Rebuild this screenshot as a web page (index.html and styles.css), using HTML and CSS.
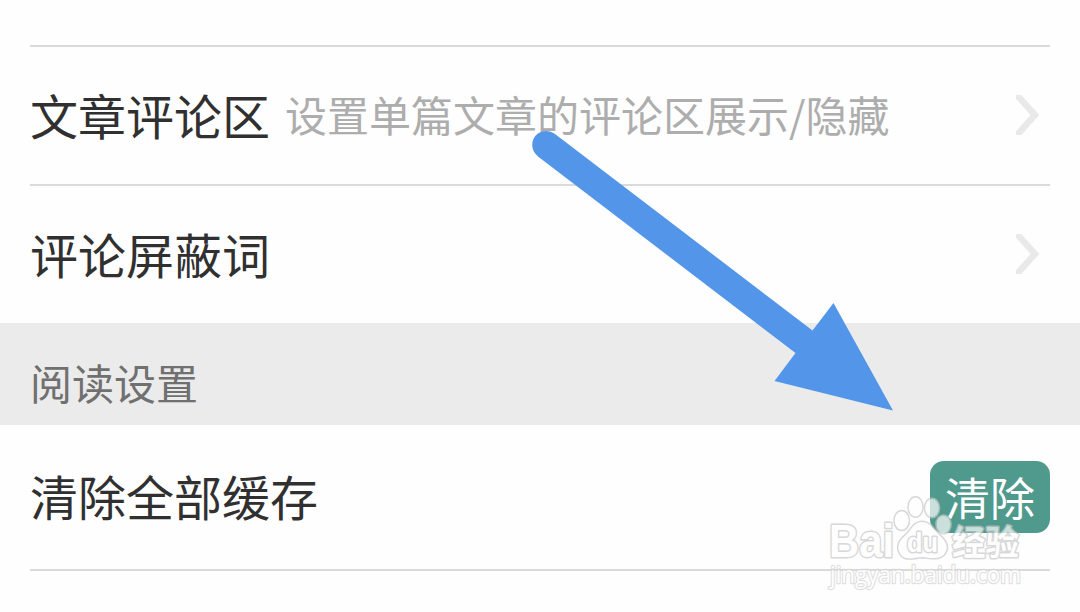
FILE: index.html
```
<!DOCTYPE html>
<html lang="zh-CN">
<head>
    <meta charset="UTF-8">
    <meta name="viewport" content="width=device-width, initial-scale=1.0">
    <title>设置</title>
    <link rel="stylesheet" href="styles.css">
</head>
<body>
    <div class="group">
        <div class="row">
            <span class="label">文章评论区</span>
            <span class="hint">设置单篇文章的评论区展示/隐藏</span>
            <svg class="chevron" width="24" height="40" viewBox="0 0 24 40">
                <path d="M0 -1L19 20L0 41"/>
            </svg>
        </div>
        <div class="row last">
            <span class="label">评论屏蔽词</span>
            <svg class="chevron" width="24" height="40" viewBox="0 0 24 40">
                <path d="M0 -1L19 20L0 41"/>
            </svg>
        </div>
    </div>
    <div class="section-title">阅读设置</div>
    <div class="row clear-row">
        <span class="label">清除全部缓存</span>
        <button class="clear-btn">清除</button>
    </div>

    <svg class="arrow" width="1080" height="612" viewBox="0 0 1080 612">
        <path d="M555 134L812.500 330.500L833.500 303L893 410.500L774.500 381L795.500 353L538 156.500C530 150 530.500 139 538 133.500C543 130 549.500 130 555 134Z"/>
    </svg>

    <svg class="watermark" width="210" height="110" viewBox="820 485 210 110">
        <g class="mark">
            <text class="brand" x="829" y="556.500" textLength="65" lengthAdjust="spacingAndGlyphs">Bai</text>
            <ellipse cx="901.700" cy="520.500" rx="7" ry="9.200"/>
            <ellipse cx="915.500" cy="507" rx="6.800" ry="9.500"/>
            <ellipse cx="932" cy="508" rx="6.800" ry="9"/>
            <ellipse cx="943.500" cy="524.500" rx="6.800" ry="8.800"/>
            <path d="M922 522C930 522 933 529 939 535C946 541 949 547 945 553C941 560 931 558 922 557C912 558 904 561 900 553C896 546 900 540 906 535C912 529 914 522 922 522Z"/>
            <text class="du" x="907" y="552" textLength="31" lengthAdjust="spacingAndGlyphs">du</text>
            <text class="name" x="952" y="555" textLength="67" lengthAdjust="spacingAndGlyphs">经验</text>
            <text class="site" x="830" y="583" textLength="191" lengthAdjust="spacingAndGlyphs">jingyan.baidu.com</text>
        </g>
    </svg>
</body>
</html>
```

FILE: styles.css
```
* {
    box-sizing: border-box;
}
body {
    margin: 0;
    padding-top: 45px;
    height: 612px;
    overflow: hidden;
    background-color: #fefefe;
    font-family: "Noto Sans CJK SC", sans-serif;
    color: #303030;
}
.group {
    border-top: 2px solid #dadada;
    margin: 0 30px;
}
.row {
    display: flex;
    align-items: center;
    height: 139px;
    border-bottom: 2px solid #dadada;
}
.row.last {
    height: 137px;
    border-bottom: none;
}
.label {
    padding-bottom: 4px;
    font-size: 48px;
    line-height: 70px;
}
.hint {
    margin-left: 15px;
    padding-bottom: 3px;
    font-size: 42px;
    line-height: 60px;
    color: #adadad;
}
.chevron {
    margin-left: auto;
    margin-right: 10px;
    margin-bottom: 1px;
}
.chevron path {
    fill: none;
    stroke: #e9e9e9;
    stroke-width: 6.5;
}
.section-title {
    height: 102px;
    padding: 18px 30px 0;
    background-color: #ebebeb;
    color: #707070;
    font-size: 42px;
    line-height: 82px;
}
.clear-row {
    height: 146px;
    margin: 0 30px;
}
.clear-btn {
    width: 120px;
    height: 72px;
    margin-left: auto;
    padding: 0;
    border: none;
    border-radius: 14px;
    background-color: #4f998d;
    color: #fff;
    font-family: inherit;
    font-size: 45px;
    line-height: 72px;
}
.arrow {
    position: absolute;
    top: 0;
    left: 0;
    fill: #5395e9;
}
.watermark {
    position: absolute;
    top: 485px;
    left: 820px;
}
.mark {
    opacity: 0.7;
    fill: #fff;
    stroke: #c8c8c8;
    stroke-width: 3;
    stroke-linejoin: round;
    paint-order: stroke;
}
.brand,
.du {
    font-family: "Liberation Sans", sans-serif;
    font-weight: bold;
}
.brand {
    font-size: 46px;
}
.du {
    font-size: 27px;
}
.name {
    font-size: 34px;
    font-weight: bold;
}
.site {
    font-family: "Open Sans", sans-serif;
    font-size: 23px;
    stroke: #d4d4d4;
    stroke-width: 2.4;
}
```
